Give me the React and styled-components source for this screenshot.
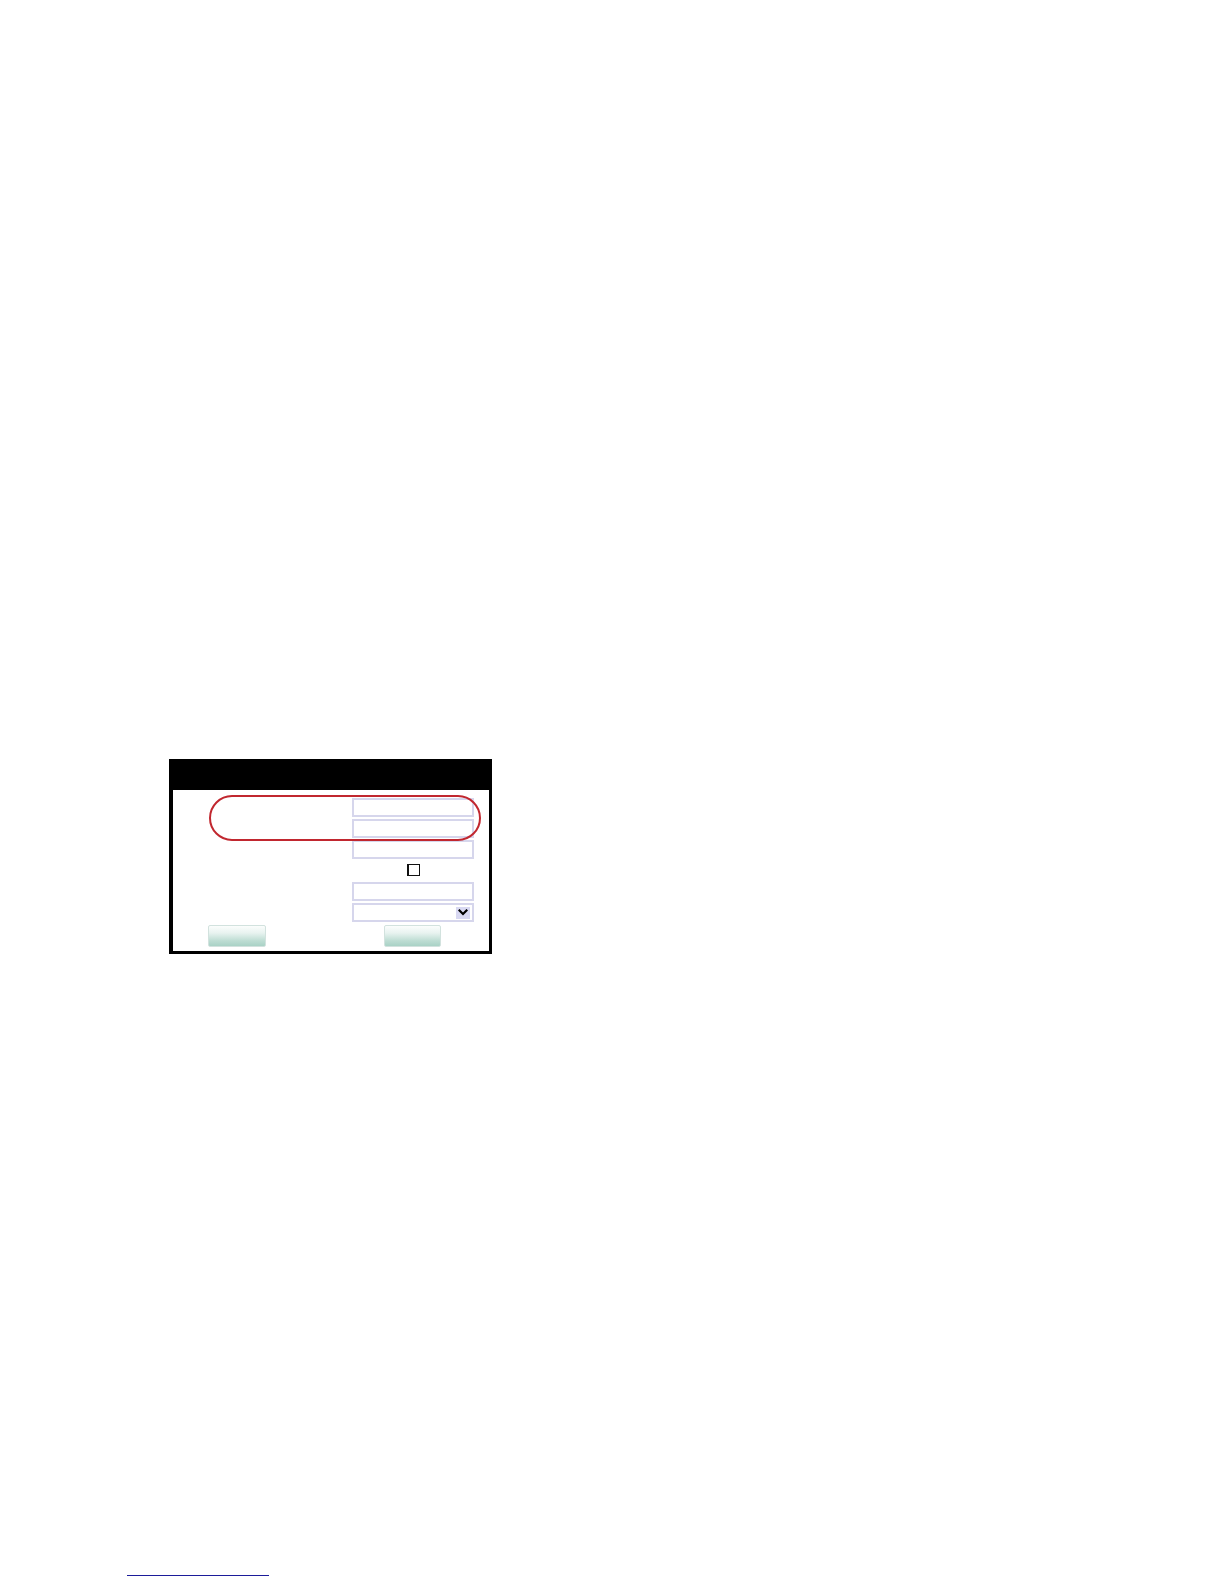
import React from "react";
import styled, { createGlobalStyle } from "styled-components";

const Global = createGlobalStyle`
  html, body { margin: 0; padding: 0; background: #ffffff; }
  body { margin: 8px; font-family: "Liberation Sans", Arial, sans-serif; font-size: 12px; }
`;

const Page = styled.div`
  display: flex;
  flex-direction: column;
  align-items: flex-start;
`;

const Panel = styled.div`
  position: relative;
  width: 323px;
  margin: 751px 0 0 161px;
`;

const Header = styled.div`
  height: 31px;
  background: #000;
`;

const Body = styled.div`
  border-left: 4px solid #000;
  border-right: 3px solid #000;
  border-bottom: 3px solid #000;
  padding: 8px 0 4px;
  display: flex;
  flex-direction: column;
`;

const Fields = styled.div`
  margin-left: 179px;
  width: 122px;
  display: flex;
  flex-direction: column;
  gap: 2px;
`;

const Input = styled.div`
  box-sizing: border-box;
  height: 19px;
  border: 2px solid #d6d6ec;
  background: #fff;
`;

const CheckRow = styled.div`
  height: 23px;
  margin: -2px 0;
  display: flex;
  justify-content: center;
  align-items: flex-start;
  padding-top: 5px;
  box-sizing: border-box;
`;

const Check = styled.div`
  box-sizing: border-box;
  width: 13px;
  height: 12px;
  border: 1.5px solid #111;
  border-left-width: 2px;
  background: #fff;
`;

const Select = styled(Input)`
  display: flex;
  justify-content: flex-end;
  align-items: center;
  padding-right: 2px;
`;

const ArrowBox = styled.div`
  width: 14px;
  height: 12px;
  background: #d8d8f2;
  display: flex;
  align-items: center;
  justify-content: center;
`;

const Buttons = styled.div`
  display: flex;
  gap: 118px;
  padding-left: 35px;
  margin-top: 3px;
  height: 22px;
`;

const Button = styled.div`
  box-sizing: border-box;
  width: ${(p) => p.$w}px;
  height: 22px;
  border: 1px solid #d2e2de;
  border-radius: 2px;
  background: linear-gradient(to bottom, #fbfdfc 0%, #e8f3f0 35%, #bcdcd2 75%, #a9d2c6 100%);
`;

const Oval = styled.div`
  position: absolute;
  left: 40px;
  top: 36px;
  width: 272px;
  height: 46px;
  box-sizing: border-box;
  border: 2px solid #c1272f;
  border-radius: 23px;
  pointer-events: none;
`;

const Link = styled.a`
  display: block;
  width: 142px;
  height: 0;
  margin: 621px 0 0 119px;
  border-bottom: 1.5px solid #1c1c9a;
`;

export default function App() {
  return (
    <>
      <Global />
      <Page>
        <Panel>
          <Header />
          <Body>
            <Fields>
              <Input />
              <Input />
              <Input />
              <CheckRow>
                <Check />
              </CheckRow>
              <Input />
              <Select>
                <ArrowBox>
                  <svg width="10" height="7" viewBox="0 0 10 7">
                    <path d="M1.5 1.5 L5 5 L8.5 1.5" fill="none" stroke="#000" strokeWidth="2.2" strokeLinecap="square" />
                  </svg>
                </ArrowBox>
              </Select>
            </Fields>
            <Buttons>
              <Button $w={58} />
              <Button $w={57} />
            </Buttons>
          </Body>
          <Oval />
        </Panel>
        <Link href="#" aria-label="link" />
      </Page>
    </>
  );
}
